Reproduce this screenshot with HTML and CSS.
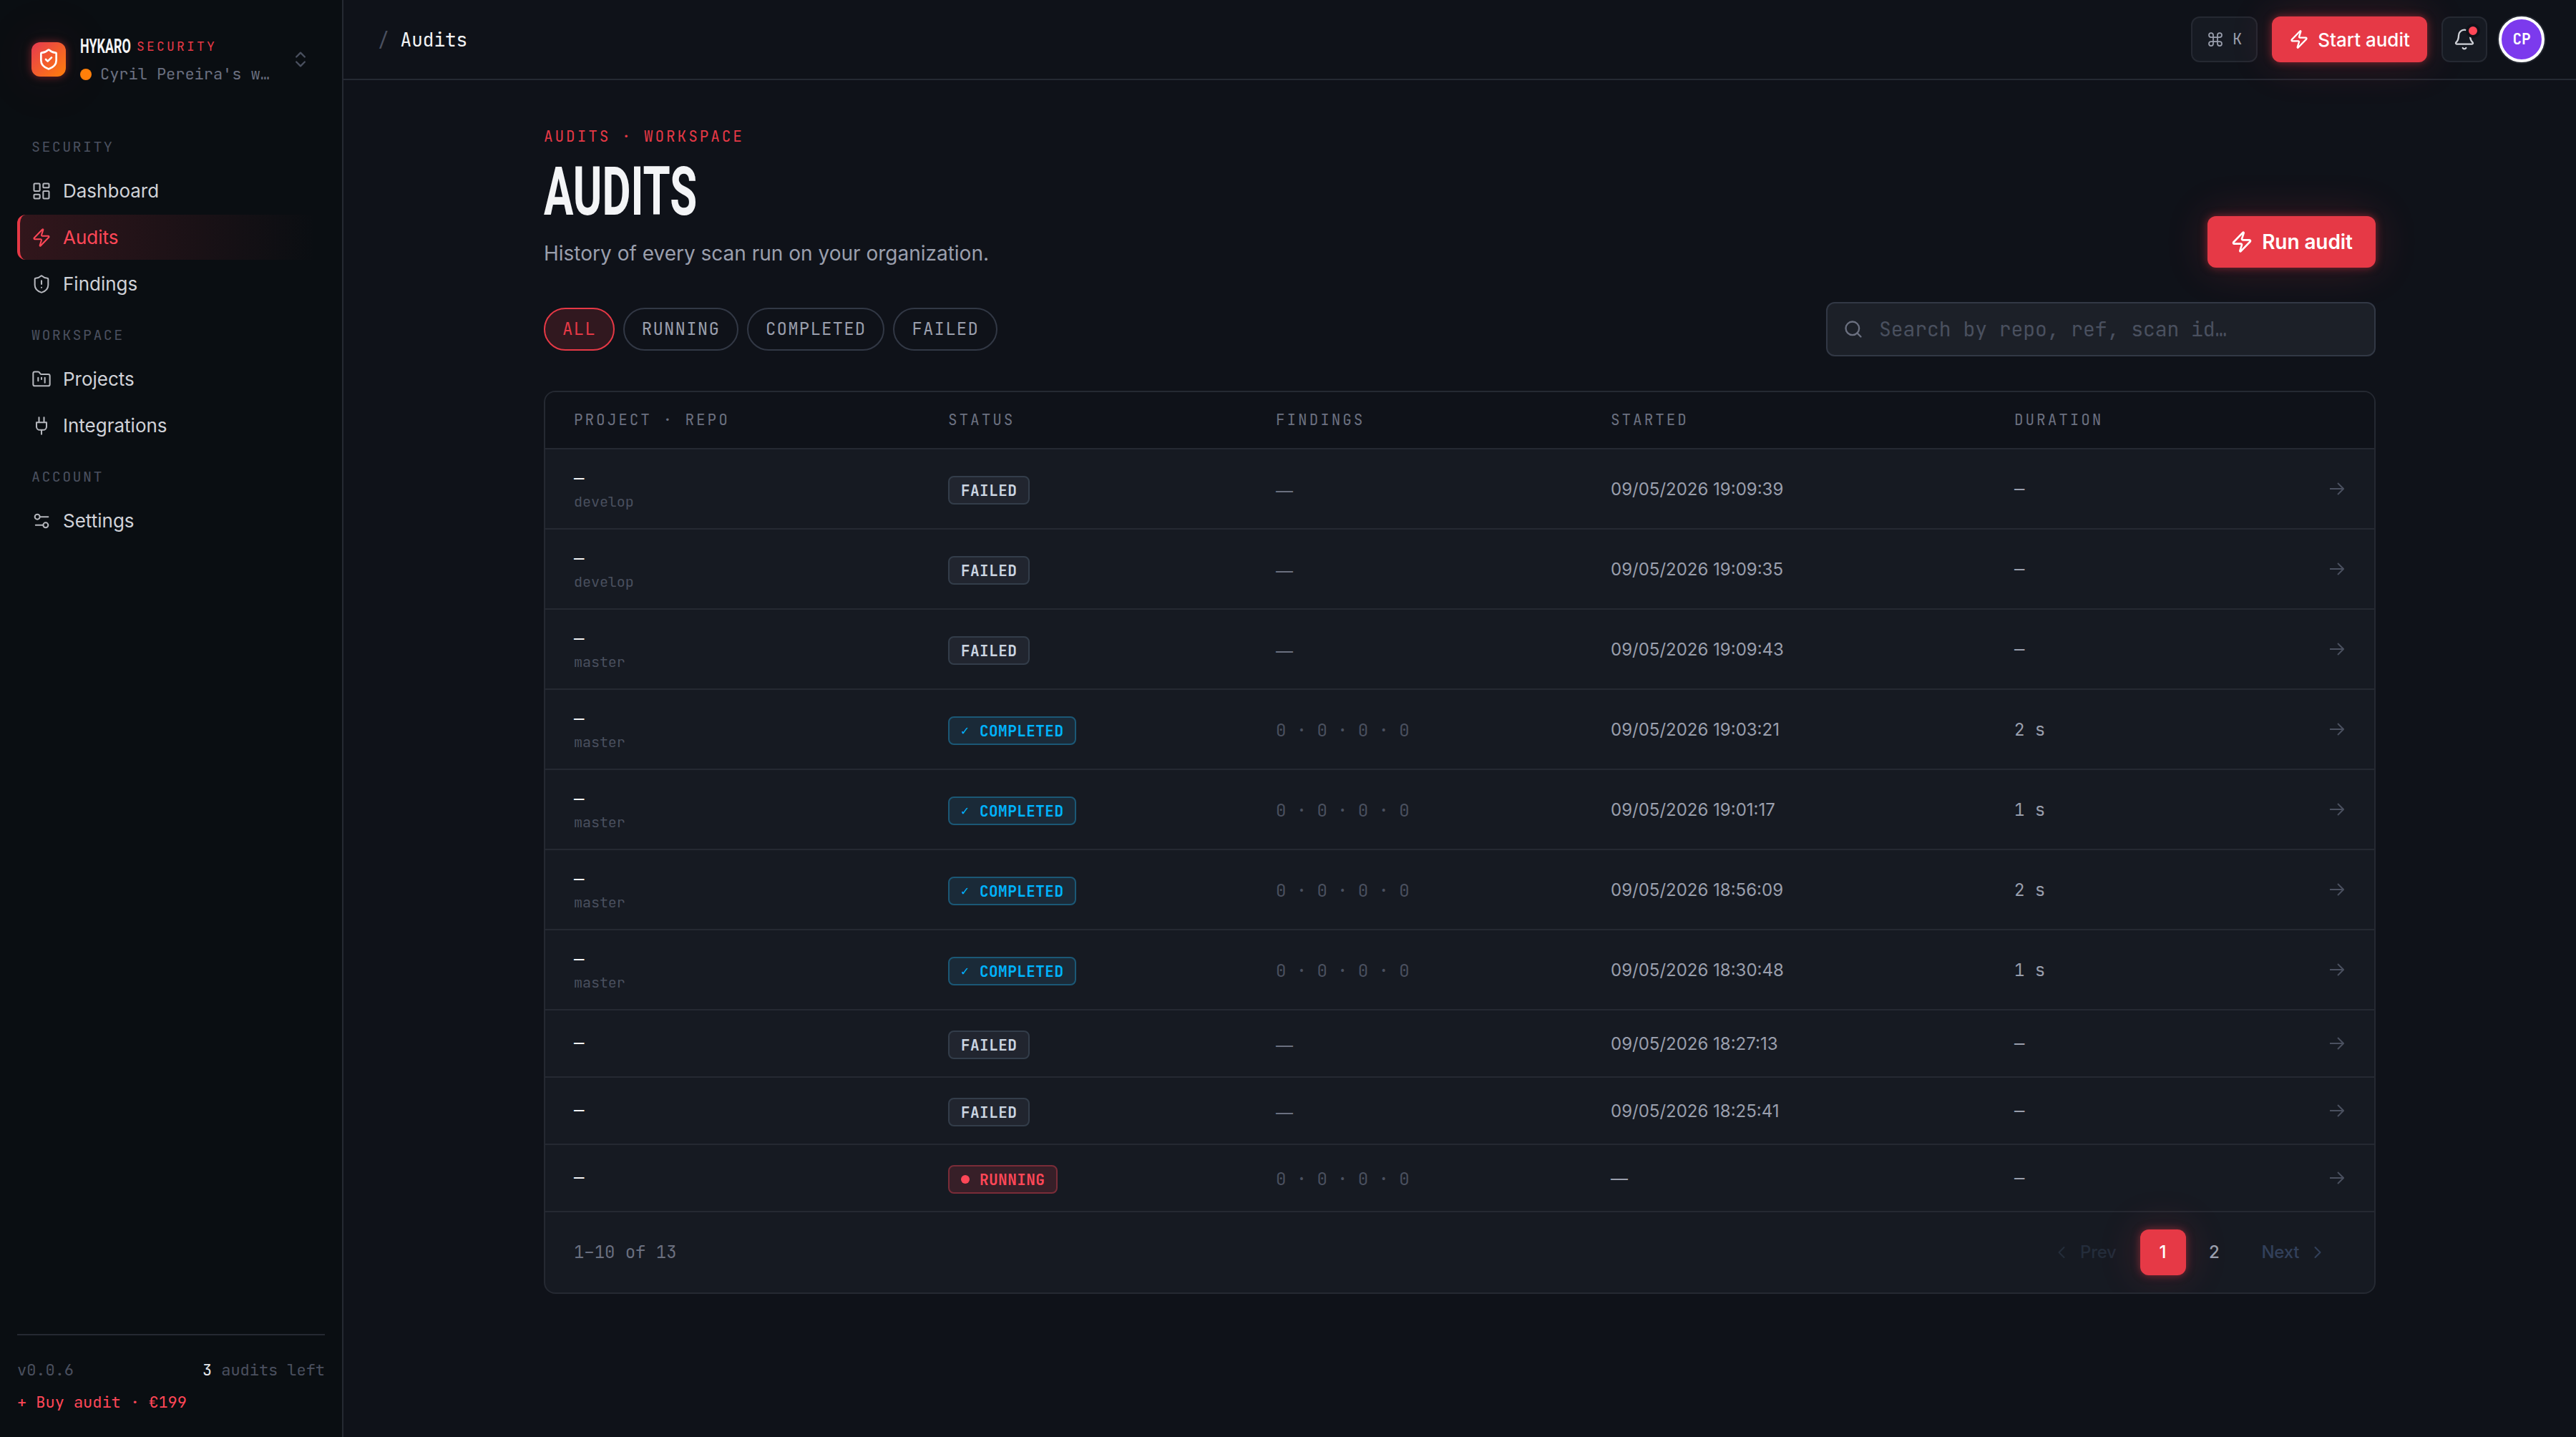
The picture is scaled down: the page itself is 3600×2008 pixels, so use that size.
FILE: index.html
```html
<!DOCTYPE html>
<html lang="en">
<head>
<meta charset="utf-8">
<title>Audits</title>
<link rel="stylesheet" href="styles.css">
</head>
<body>
<svg class="sprite" aria-hidden="true">
  <symbol id="zap" viewBox="0 0 24 24"><path d="M4 14a1 1 0 0 1-.78-1.63l9.9-10.2a.5.5 0 0 1 .86.46l-1.92 6.02A1 1 0 0 0 13 10h7a1 1 0 0 1 .78 1.63l-9.9 10.2a.5.5 0 0 1-.86-.46l1.92-6.02A1 1 0 0 0 11 14z"/></symbol>
  <symbol id="arrow" viewBox="0 0 20 18"><path d="M0 9h19M11 1l8 8-8 8"/></symbol>
</svg>
<div class="app">
  <aside class="sidebar">
    <div class="brand">
      <div class="logo"><svg class="icon" viewBox="0 0 24 24"><path d="M20 13c0 5-3.5 7.5-7.66 8.95a1 1 0 0 1-.67-.01C7.5 20.5 4 18 4 13V6a1 1 0 0 1 1-1c2 0 4.500-1.200 6.240-2.720a1.170 1.170 0 0 1 1.520 0C14.510 3.810 17 5 19 5a1 1 0 0 1 1 1z"/><path d="m9 12 2 2 4-4"/></svg></div>
      <div class="brand-text">
        <div class="brand-name"><span class="wordmark"><span>HYKARO</span></span><span class="product">SECURITY</span></div>
        <div class="workspace"><i class="dot"></i><span>Cyril Pereira's w…</span></div>
      </div>
      <svg class="icon switcher" viewBox="0 0 24 24"><path d="m7 15 5 5 5-5M7 9l5-5 5 5"/></svg>
    </div>
    <nav class="nav">
      <div class="nav-label">SECURITY</div>
      <a class="nav-item"><svg class="icon" viewBox="0 0 24 24"><rect x="3" y="3" width="7" height="9" rx="1"/><rect x="14" y="3" width="7" height="5" rx="1"/><rect x="14" y="12" width="7" height="9" rx="1"/><rect x="3" y="16" width="7" height="5" rx="1"/></svg>Dashboard</a>
      <a class="nav-item active"><svg class="icon"><use href="#zap"/></svg>Audits</a>
      <a class="nav-item"><svg class="icon" viewBox="0 0 24 24"><path d="M20 13c0 5-3.500 7.500-7.660 8.950a1 1 0 0 1-.67-.01C7.500 20.500 4 18 4 13V6a1 1 0 0 1 1-1c2 0 4.500-1.200 6.240-2.720a1.170 1.170 0 0 1 1.520 0C14.510 3.810 17 5 19 5a1 1 0 0 1 1 1z"/><path d="M12 8v4M12 16h.01"/></svg>Findings</a>
      <div class="nav-label">WORKSPACE</div>
      <a class="nav-item"><svg class="icon" viewBox="0 0 24 24"><path d="M4 20h16a2 2 0 0 0 2-2V8a2 2 0 0 0-2-2h-7.930a2 2 0 0 1-1.660-.9l-.82-1.200A2 2 0 0 0 7.930 3H4a2 2 0 0 0-2 2v13c0 1.100.9 2 2 2Z"/><path d="M8 10v4M12 10v2M16 10v6"/></svg>Projects</a>
      <a class="nav-item"><svg class="icon" viewBox="0 0 24 24"><path d="M12 22v-5M9 8V2M15 8V2M18 8v5a4 4 0 0 1-4 4h-4a4 4 0 0 1-4-4V8Z"/></svg>Integrations</a>
      <div class="nav-label">ACCOUNT</div>
      <a class="nav-item"><svg class="icon" viewBox="0 0 24 24"><path d="M20 7h-9M14 17H5"/><circle cx="17" cy="17" r="3"/><circle cx="7" cy="7" r="3"/></svg>Settings</a>
    </nav>
    <div class="side-foot">
      <div class="quota"><span>v0.0.6</span><span><b>3</b> audits left</span></div>
      <a class="buy">+ Buy audit · €199</a>
    </div>
  </aside>

  <div class="main">
    <header class="topbar">
      <div class="crumbs"><span class="slash">/</span><span>Audits</span></div>
      <div class="tools">
        <div class="kbd"><svg class="icon" viewBox="0 0 24 24"><path d="M15 6v12a3 3 0 1 0 3-3H6a3 3 0 1 0 3 3V6a3 3 0 1 0-3 3h12a3 3 0 1 0-3-3"/></svg>K</div>
        <a class="btn"><svg class="icon"><use href="#zap"/></svg>Start audit</a>
        <div class="bell"><svg class="icon" viewBox="0 0 24 24"><path d="M10.268 21a2 2 0 0 0 3.464 0M3.262 15.326A1 1 0 0 0 4 17h16a1 1 0 0 0 .74-1.673C19.410 13.956 18 12.499 18 8A6 6 0 0 0 6 8c0 4.499-1.411 5.956-2.738 7.326"/></svg><i class="alert"></i></div>
        <div class="avatar">CP</div>
      </div>
    </header>

    <main class="content">
      <div class="eyebrow">AUDITS · WORKSPACE</div>
      <div class="head">
        <div>
          <h1 class="title"><span>AUDITS</span></h1>
          <p class="subtitle">History of every scan run on your organization.</p>
        </div>
        <a class="btn large"><svg class="icon"><use href="#zap"/></svg>Run audit</a>
      </div>
      <div class="controls">
        <div class="chips"><span class="chip on">ALL</span><span class="chip">RUNNING</span><span class="chip">COMPLETED</span><span class="chip">FAILED</span></div>
        <div class="search"><svg class="icon" viewBox="0 0 24 24"><circle cx="11" cy="11" r="8"/><path d="m21 21-4.340-4.340"/></svg><span>Search by repo, ref, scan id…</span></div>
      </div>

      <section class="table">
        <div class="row header"><span>PROJECT · REPO</span><span>STATUS</span><span>FINDINGS</span><span>STARTED</span><span>DURATION</span></div>
        <div class="row"><div class="repo"><b>—</b><small>develop</small></div><div><span class="badge">FAILED</span></div><div class="none">—</div><div class="date">09/05/2026 19:09:39</div><div class="dur">—</div><svg class="go"><use href="#arrow"/></svg></div>
        <div class="row"><div class="repo"><b>—</b><small>develop</small></div><div><span class="badge">FAILED</span></div><div class="none">—</div><div class="date">09/05/2026 19:09:35</div><div class="dur">—</div><svg class="go"><use href="#arrow"/></svg></div>
        <div class="row"><div class="repo"><b>—</b><small>master</small></div><div><span class="badge">FAILED</span></div><div class="none">—</div><div class="date">09/05/2026 19:09:43</div><div class="dur">—</div><svg class="go"><use href="#arrow"/></svg></div>
        <div class="row"><div class="repo"><b>—</b><small>master</small></div><div><span class="badge done"><i>✓</i>COMPLETED</span></div><div class="counts">0 · 0 · 0 · 0</div><div class="date">09/05/2026 19:03:21</div><div class="dur">2 s</div><svg class="go"><use href="#arrow"/></svg></div>
        <div class="row"><div class="repo"><b>—</b><small>master</small></div><div><span class="badge done"><i>✓</i>COMPLETED</span></div><div class="counts">0 · 0 · 0 · 0</div><div class="date">09/05/2026 19:01:17</div><div class="dur">1 s</div><svg class="go"><use href="#arrow"/></svg></div>
        <div class="row"><div class="repo"><b>—</b><small>master</small></div><div><span class="badge done"><i>✓</i>COMPLETED</span></div><div class="counts">0 · 0 · 0 · 0</div><div class="date">09/05/2026 18:56:09</div><div class="dur">2 s</div><svg class="go"><use href="#arrow"/></svg></div>
        <div class="row"><div class="repo"><b>—</b><small>master</small></div><div><span class="badge done"><i>✓</i>COMPLETED</span></div><div class="counts">0 · 0 · 0 · 0</div><div class="date">09/05/2026 18:30:48</div><div class="dur">1 s</div><svg class="go"><use href="#arrow"/></svg></div>
        <div class="row short"><div class="repo"><b>—</b></div><div><span class="badge">FAILED</span></div><div class="none">—</div><div class="date">09/05/2026 18:27:13</div><div class="dur">—</div><svg class="go"><use href="#arrow"/></svg></div>
        <div class="row short"><div class="repo"><b>—</b></div><div><span class="badge">FAILED</span></div><div class="none">—</div><div class="date">09/05/2026 18:25:41</div><div class="dur">—</div><svg class="go"><use href="#arrow"/></svg></div>
        <div class="row short"><div class="repo"><b>—</b></div><div><span class="badge live"><i class="pulse"></i>RUNNING</span></div><div class="counts">0 · 0 · 0 · 0</div><div class="date">—</div><div class="dur">—</div><svg class="go"><use href="#arrow"/></svg></div>
        <div class="table-foot">
          <span class="range">1–10 of 13</span>
          <div class="pager">
            <span class="step prev"><svg class="icon" viewBox="0 0 24 24"><path d="m15 18-6-6 6-6"/></svg>Prev</span>
            <span class="page current">1</span><span class="page">2</span>
            <span class="step">Next<svg class="icon" viewBox="0 0 24 24"><path d="m9 18 6-6-6-6"/></svg></span>
          </div>
        </div>
      </section>
    </main>
  </div>
</div>
</body>
</html>
```
FILE: styles.css
```css
:root {
  --red: #e63946;
  --red-bright: #ff4757;
  --line: #252932;
  --line-strong: #323845;
  --text: #f3f4f6;
  --muted: #9a9fad;
  --dim: #6b7080;
  --faint: #4a505f;
  --mono: "JetBrains Mono", "DejaVu Sans Mono", monospace;
  --sans: Inter, sans-serif;
}
* { box-sizing: border-box; }
body { margin: 0; background: #0f1219; color: var(--text); font-family: var(--sans); }
.sprite { display: none; }
.icon { width: 28px; height: 28px; flex: none; fill: none; stroke: currentColor; stroke-width: 1.75; stroke-linecap: round; stroke-linejoin: round; }
.app { display: flex; width: 3600px; height: 2008px; overflow: hidden; }

/* sidebar */
.sidebar { width: 480px; flex: none; display: flex; flex-direction: column; background: #0a0e12; border-right: 2px solid var(--line); padding: 44px 24px 0; }
.brand { display: flex; align-items: center; height: 78px; padding-left: 20px; }
.logo { width: 48px; height: 48px; border-radius: 12px; display: grid; place-items: center; background: linear-gradient(135deg, #e63950 0%, #ff7f0a 100%); box-shadow: 0 0 12px rgba(230, 57, 70, .5), 0 0 80px rgba(230, 57, 70, .14); }
.logo .icon { width: 32px; height: 32px; stroke-width: 2; color: #fff; }
.brand-text { margin-left: 20px; width: 270px; padding-top: 4px; }
.brand-name { display: flex; align-items: center; height: 38px; }
.wordmark { width: 79px; font: 700 27px/38px Roboto, sans-serif; white-space: nowrap; }
.wordmark span { display: inline-block; transform: scaleX(.665); transform-origin: left; }
.product { font: 18px/36px var(--mono); letter-spacing: 3.200px; color: var(--red); }
.workspace { display: flex; align-items: center; gap: 12px; height: 40px; font: 22px/40px var(--mono); letter-spacing: -.04px; color: var(--dim); white-space: nowrap; }
.dot { width: 16px; height: 16px; border-radius: 50%; background: #ff7f0a; }
.switcher { margin-left: 24px; stroke-width: 2; color: var(--faint); }
.nav { display: flex; flex-direction: column; margin-top: 42px; }
.nav-label { font: 20px/24px var(--mono); letter-spacing: 2.400px; color: var(--faint); margin: 26px 0 18px 20px; }
.nav-item { display: flex; align-items: center; gap: 16px; height: 63px; margin-bottom: 2px; padding-left: 16px; border-left: 4px solid transparent; border-radius: 12px; font-size: 26px; color: #d0d2d8; }
.nav-label:first-child { margin-top: 29px; }
.nav-item .icon { color: #b5b7bd; }
.nav-item.active { color: var(--red-bright); border-left-color: var(--red); background: linear-gradient(90deg, rgba(230, 57, 70, .18), rgba(230, 57, 70, 0) 97%); }
.nav-item.active .icon { color: var(--red-bright); }
.side-foot { margin-top: auto; height: 144px; border-top: 2px solid var(--line); padding-top: 26px; font: 22px/45px var(--mono); letter-spacing: -.04px; color: var(--faint); }
.quota { display: flex; justify-content: space-between; }
.quota b { font-weight: 400; color: #e5e7eb; }
.buy { color: var(--red-bright); display: block; }

/* top bar */
.main { flex: 1; display: flex; flex-direction: column; }
.topbar { height: 112px; flex: none; display: flex; align-items: center; justify-content: space-between; border-bottom: 2px solid var(--line); padding: 0 44px 0 48px; }
.crumbs { display: flex; gap: 16px; font: 26px/36px var(--mono); padding-top: 2px; }
.slash { color: var(--faint); }
.tools { display: flex; align-items: center; }
.kbd { display: flex; align-items: center; justify-content: center; gap: 12px; width: 93px; height: 64px; margin-right: 20px; border: 2px solid var(--line); border-radius: 12px; background: #161a22; color: var(--muted); font: 22px/1 var(--mono); }
.kbd .icon { width: 24px; height: 24px; }
.btn { display: flex; align-items: center; justify-content: center; gap: 12px; width: 217px; height: 64px; border-radius: 12px; background: var(--red); color: #fff; font-size: 26px; font-weight: 500; white-space: nowrap; box-shadow: 0 0 12px rgba(230, 57, 70, .5), 0 0 60px rgba(230, 57, 70, .2); }
.btn .icon { stroke-width: 2; }
.btn.large { width: 235px; height: 72px; font-size: 28px; font-weight: 600; letter-spacing: -.1px; }
.btn.large .icon { width: 32px; height: 32px; }
.bell { position: relative; display: grid; place-items: center; width: 64px; height: 64px; margin: 0 16px 0 20px; border: 2px solid var(--line); border-radius: 12px; background: #161a22; color: #d0d2d8; }
.bell .icon { width: 32px; height: 32px; }
.alert { position: absolute; top: 8px; right: 8px; width: 20px; height: 20px; border: 4px solid #0f1219; border-radius: 50%; background: var(--red-bright); }
.avatar { width: 64px; height: 64px; border: 4px solid #fff; border-radius: 50%; background: #7c3aed; box-shadow: 0 0 0 2px var(--line); color: #fff; font: 600 21px/56px var(--mono); text-align: center; }

/* page head */
.content { width: 2560px; margin: 0 auto; padding-top: 64px; }
.eyebrow { font: 21px/30px var(--mono); letter-spacing: 2.950px; color: var(--red); }
.head { display: flex; justify-content: space-between; align-items: flex-end; height: 168px; }
.title { margin: 0; height: 112px; font: 700 95px/114px Roboto, sans-serif; color: var(--text); }
.title span { display: inline-block; transform: scaleX(.648); transform-origin: left; }
.subtitle { margin: 11px 0 0; font-size: 28px; line-height: 40px; color: var(--muted); }
.controls { display: flex; justify-content: space-between; align-items: center; margin-top: 48px; height: 76px; }
.chips { display: flex; gap: 12px; }
.chip { height: 60px; padding: 0 24px; border: 2px solid var(--line-strong); border-radius: 30px; font: 24px/56px var(--mono); letter-spacing: 1.200px; color: var(--muted); }
.chip.on { border-color: var(--red); background: rgba(230, 57, 70, .16); color: var(--red); }
.search { display: flex; align-items: center; gap: 22px; width: 768px; height: 76px; padding-left: 22px; border: 2px solid var(--line-strong); border-radius: 12px; background: #1c2028; font: 28px/1 var(--mono); letter-spacing: -.03px; color: var(--faint); }
.search .icon { color: var(--dim); stroke-width: 2; }

/* audits table */
.table { margin-top: 48px; border: 2px solid var(--line); border-radius: 16px; background: #161a22; overflow: hidden; }
.row { display: grid; grid-template-columns: 523px 458px 468px 564px 1fr 20px; align-items: center; height: 112px; padding: 0 42px 0 40px; border-bottom: 2px solid var(--line); font-size: 24px; }
.row.short { height: 94px; }
.row.header { height: 80px; background: #0f1219; font: 21px/30px var(--mono); letter-spacing: 2.950px; color: var(--dim); }
.repo { display: flex; flex-direction: column; font-family: var(--mono); }
.repo b { font-weight: 400; line-height: 36px; }
.repo small { font-size: 20px; line-height: 28px; letter-spacing: -.04px; color: var(--faint); }
.badge { display: inline-flex; align-items: center; height: 40px; padding: 0 16px; margin-top: 4px; border: 2px solid #333d4a; border-radius: 8px; background: #21252f; font: 600 21px/1 var(--mono); letter-spacing: .450px; color: #cbd5e1; vertical-align: middle; }
.badge i { width: 26px; font-style: normal; font-weight: 400; font-size: 18px; }
.badge.done { border-color: #1b5876; background: #1a2a38; color: #00b4ff; }
.badge.live { border-color: #7a2c38; background: #371f28; color: var(--red-bright); }
.badge .pulse { width: 12px; height: 12px; margin-right: 14px; border-radius: 50%; background: currentColor; }
.none { color: var(--dim); padding-top: 4px; }
.counts { font-family: var(--mono); letter-spacing: -.05px; color: var(--faint); padding-top: 3px; }
.date { color: var(--muted); }
.dur { font-family: var(--mono); color: var(--muted); letter-spacing: -.05px; }
.go { width: 20px; height: 18px; fill: none; stroke: var(--faint); stroke-width: 2; }
.table-foot { display: flex; align-items: center; justify-content: space-between; height: 112px; padding: 0 40px; }
.range { font: 24px/1 var(--mono); letter-spacing: -.05px; color: var(--dim); }
.pager { display: flex; gap: 8px; font-size: 24px; font-weight: 500; line-height: 64px; }
.page { width: 64px; height: 64px; border-radius: 12px; text-align: center; color: var(--muted); }
.page.current { background: var(--red); color: #fff; box-shadow: 0 0 12px rgba(230, 57, 70, .5), 0 0 60px rgba(230, 57, 70, .2); }
.step { display: flex; align-items: center; gap: 12px; padding: 0 25px 0 26px; letter-spacing: -.3px; color: #32405a; }
.step.prev { color: #242d3b; }
```
